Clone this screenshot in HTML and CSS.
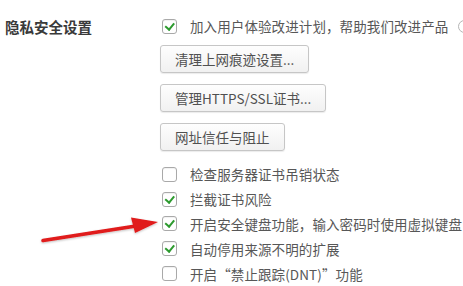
FILE: index.html
```html
<!DOCTYPE html>
<html lang="zh-CN">
<head>
	<meta charset="UTF-8">
	<title>隐私安全设置</title>
	<link rel="stylesheet" href="styles.css">
</head>
<body>
	<div class="section">
		<div class="label">隐私安全设置</div>
		<div class="options">
			<div class="row">
				<span class="box on"></span>
				<span class="text">加入用户体验改进计划，帮助我们改进产品</span>
				<span class="info"></span>
			</div>
			<div class="buttons">
				<div class="btn">清理上网痕迹设置...</div>
				<div class="btn">管理HTTPS/SSL证书...</div>
				<div class="btn">网址信任与阻止</div>
			</div>
			<div class="list">
				<div class="row">
					<span class="box"></span>
					<span class="text">检查服务器证书吊销状态</span>
				</div>
				<div class="row">
					<span class="box on"></span>
					<span class="text">拦截证书风险</span>
				</div>
				<div class="row">
					<span class="box on"></span>
					<span class="text">开启安全键盘功能，输入密码时使用虚拟键盘</span>
				</div>
				<div class="row">
					<span class="box on"></span>
					<span class="text">自动停用来源不明的扩展</span>
				</div>
				<div class="row">
					<span class="box"></span>
					<span class="text">开启“禁止跟踪(DNT)”功能</span>
				</div>
			</div>
		</div>
	</div>
	<!-- red pointer arrow drawn over the page -->
	<svg class="arrow" width="180" height="40" viewBox="0 0 180 40">
		<defs>
			<filter id="sh" x="-10%" y="-50%" width="120%" height="200%">
				<feDropShadow dx="0" dy="1" stdDeviation="1" flood-color="#000" flood-opacity="0.25"/>
			</filter>
		</defs>
		<g filter="url(#sh)">
			<path d="M43 31.5 L136 17" stroke="#e01a1a" stroke-width="3.6" stroke-linecap="round" fill="none"/>
			<polygon points="158,13 131,8.5 135,24" fill="#e01a1a"/>
		</g>
	</svg>
</body>
</html>
```

FILE: styles.css
```css
html, body{
	margin: 0;
	padding: 0;
	background: #fff;
}
body{
	width: 463px;
	height: 286px;
	overflow: hidden;
	position: relative;
	font-family: "Noto Sans CJK SC", "Noto Sans", sans-serif;
}
.section{
	display: flex;
	padding-top: 14px;
}
.label{
	flex: none;
	width: 162px;
	padding-left: 5px;
	box-sizing: border-box;
	font-size: 14.5px;
	font-weight: bold;
	color: #3a3a3a;
	line-height: 24px;
	height: 24px;
	margin-top: 1px;
}
.options{
	flex: none;
	display: flex;
	flex-direction: column;
}
.row{
	display: flex;
	align-items: center;
	height: 24px;
	white-space: nowrap;
}
.list .row{
	height: 24.8px;
}
.box{
	width: 13px;
	height: 13px;
	border: 1px solid #a9a9a9;
	border-radius: 3px;
	background: #fff;
	flex: none;
	position: relative;
	box-shadow: inset 0 1px 1px rgba(0,0,0,0.06);
}
.box.on::after{
	content: "";
	position: absolute;
	left: 4px;
	top: 1px;
	width: 3.5px;
	height: 6.5px;
	border: solid #2c9a2e;
	border-width: 0 2.6px 2.6px 0;
	transform: rotate(40deg);
}
.text{
	margin-left: 13px;
	font-size: 13.5px;
	color: #575757;
	letter-spacing: 0.1px;
}
.info{
	margin-left: 10px;
	width: 11px;
	height: 11px;
	border: 1px solid #b5b5b5;
	border-radius: 50%;
	flex: none;
}
.buttons{
	display: flex;
	flex-direction: column;
	align-items: flex-start;
	gap: 11px;
	margin-top: 7px;
	margin-left: -2px;
}
.btn{
	height: 26px;
	line-height: 26px;
	padding: 0 14px;
	border: 1px solid #c6c6c6;
	border-radius: 3px;
	background: linear-gradient(#fefefe, #f1f1f1);
	box-shadow: 0 1px 1px rgba(0,0,0,0.08);
	font-size: 13.5px;
	color: #505050;
	white-space: nowrap;
}
.list{
	margin-top: 11px;
	display: flex;
	flex-direction: column;
}
.arrow{
	position: absolute;
	left: 0;
	top: 209px;
}
```
